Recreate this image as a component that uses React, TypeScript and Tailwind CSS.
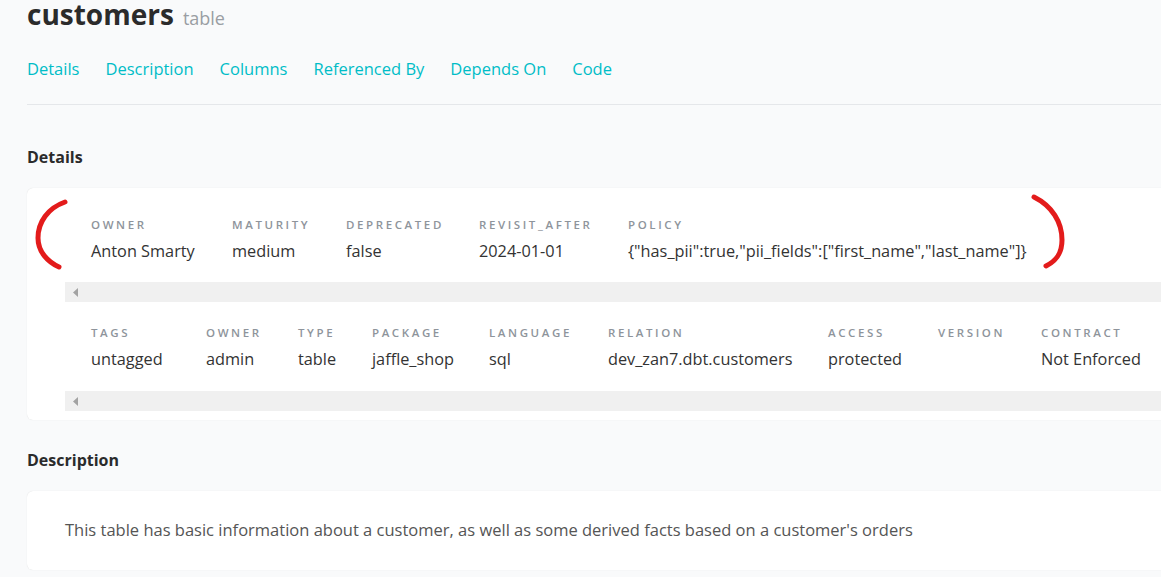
import React from "react";

const FONT = "font-['Open_Sans','Noto_Sans',sans-serif]";

const tabs = ["Details", "Description", "Columns", "Referenced By", "Depends On", "Code"];

const metaRow = [
    { label: "Owner", value: "Anton Smarty", w: "w-[141px]" },
    { label: "Maturity", value: "medium", w: "w-[114px]" },
    { label: "Deprecated", value: "false", w: "w-[133px]" },
    { label: "Revisit_After", value: "2024-01-01", w: "w-[149px]" },
    { label: "Policy", value: '{"has_pii":true,"pii_fields":["first_name","last_name"]}', w: "w-auto" },
];

const infoRow = [
    { label: "Tags", value: "untagged", w: "w-[115px]" },
    { label: "Owner", value: "admin", w: "w-[92px]" },
    { label: "Type", value: "table", w: "w-[74px]" },
    { label: "Package", value: "jaffle_shop", w: "w-[117px]" },
    { label: "Language", value: "sql", w: "w-[119px]" },
    { label: "Relation", value: "dev_zan7.dbt.customers", w: "w-[220px]" },
    { label: "Access", value: "protected", w: "w-[110px]" },
    { label: "Version", value: "", w: "w-[103px]" },
    { label: "Contract", value: "Not Enforced", w: "w-auto" },
];

type Cell = { label: string; value: string; w: string };

const DetailRow = ({ cells, pad }: { cells: Cell[]; pad: string }) => (
    <div className={`flex pl-[26px] ${pad}`}>
        {cells.map((c) => (
            <div key={c.label} className={`${c.w} shrink-0`}>
                <div className="text-[11.5px] font-semibold uppercase leading-[16px] tracking-[2.6px] text-[#8e949b]">
                    {c.label}
                </div>
                <div className="mt-[7px] whitespace-nowrap text-[16.3px] leading-[22px] text-[#333]">
                    {c.value}
                </div>
            </div>
        ))}
    </div>
);

// fake horizontal scrollbar under each table
const ScrollBar = () => (
    <div className="flex h-[20px] items-center bg-[#f0f0f0] pl-[8px]">
        <svg width="6" height="9" viewBox="0 0 6 9">
            <path d="M5 0 L0 4.5 L5 9 Z" fill="#a3a3a3" />
        </svg>
    </div>
);

export default function App() {
    return (
        <div className={`relative h-[577px] w-[1161px] overflow-hidden bg-[#f9fafb] ${FONT}`}>
            <div className="w-[1300px] pl-[27px]">
                {/* title */}
                <div className="-mt-[6px] flex items-baseline gap-[9px]">
                    <h1 className="text-[28px] font-bold leading-[40px] text-[#2b2b2b]">customers</h1>
                    <span className="text-[18px] text-[#9a9ea3]">table</span>
                </div>

                {/* tabs */}
                <div className="mt-[21px] flex gap-[26px] border-b border-[#e5e7ea] pb-[21px]">
                    {tabs.map((t) => (
                        <a key={t} className="cursor-pointer text-[16.5px] leading-[28px] text-[#00bdc7]">
                            {t}
                        </a>
                    ))}
                </div>

                {/* details */}
                <h2 className="mt-[40px] text-[16px] font-bold leading-[24px] text-[#2b2b2b]">Details</h2>
                <div className="mt-[19px] rounded-[6px] bg-white pl-[38px] shadow-[0_0_1px_rgba(0,0,0,0.15)]">
                    <DetailRow cells={metaRow} pad="pt-[29px] pb-[20px]" />
                    <ScrollBar />
                    <DetailRow cells={infoRow} pad="pt-[23px] pb-[21px]" />
                    <ScrollBar />
                    <div className="h-[9px]" />
                </div>

                {/* description */}
                <h2 className="mt-[28px] text-[16px] font-bold leading-[24px] text-[#2b2b2b]">Description</h2>
                <div className="mt-[19px] rounded-[6px] bg-white px-[38px] pb-[28px] pt-[27px] shadow-[0_0_1px_rgba(0,0,0,0.15)]">
                    <p className="text-[16.5px] leading-[24px] text-[#555]">
                        This table has basic information about a customer, as well as some derived facts based on a customer's orders
                    </p>
                </div>
            </div>

            {/* red marker annotations */}
            <svg className="pointer-events-none absolute left-0 top-0" width="1161" height="577">
                <path
                    d="M65 202 C48 208 38 222 38 238 C38 252 48 262 59 267"
                    fill="none"
                    stroke="#e31b1b"
                    strokeWidth="5"
                    strokeLinecap="round"
                />
                <path
                    d="M1034 197 C1052 206 1062 222 1062 240 C1062 254 1056 261 1046 266"
                    fill="none"
                    stroke="#e31b1b"
                    strokeWidth="5"
                    strokeLinecap="round"
                />
            </svg>
        </div>
    );
}
